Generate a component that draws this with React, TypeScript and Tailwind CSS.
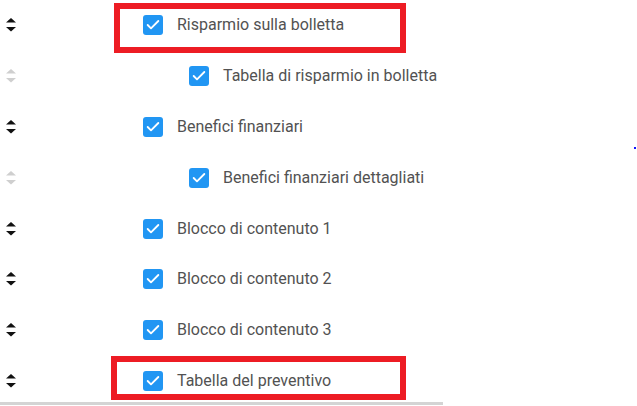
import { Check } from "lucide-react";

interface Row {
  label: string;
  nested?: boolean;
}

const rows: Row[] = [
  { label: "Risparmio sulla bolletta" },
  { label: "Tabella di risparmio in bolletta", nested: true },
  { label: "Benefici finanziari" },
  { label: "Benefici finanziari dettagliati", nested: true },
  { label: "Blocco di contenuto 1" },
  { label: "Blocco di contenuto 2" },
  { label: "Blocco di contenuto 3" },
  { label: "Tabella del preventivo" },
];

function SortHandle({ disabled }: { disabled?: boolean }) {
  const fill = disabled ? "#cfcfcf" : "#111111";
  return (
    <svg width="12" height="16" viewBox="0 0 12 16" className="shrink-0">
      <path d="M1 5.5 L6 1 L11 5.5 Z" fill={fill} />
      <path d="M1 10 L11 10 L6 14.5 Z" fill={fill} />
    </svg>
  );
}

function Checkbox() {
  return (
    <div className="flex h-5 w-5 shrink-0 items-center justify-center rounded-[3px] bg-[#2196f3]">
      <Check className="h-4 w-4 text-white" strokeWidth={2.75} />
    </div>
  );
}

export default function App() {
  return (
    <div className="relative h-[406px] w-[637px] overflow-hidden bg-white font-['Roboto',sans-serif]">
      <div className="flex flex-col">
        {rows.map((row) => (
          <div key={row.label} className="flex h-[50.8px] items-center pl-[5px]">
            <SortHandle disabled={row.nested} />
            <div className={`flex items-center gap-[14px] ${row.nested ? "ml-[172px]" : "ml-[126px]"}`}>
              <Checkbox />
              <span className="text-[16px] text-[#525252]">{row.label}</span>
            </div>
          </div>
        ))}
      </div>
      <div className="-mt-[4.4px] h-[3px] w-[443px] bg-[#d4d4d4]" />

      {/* highlight boxes drawn on top of the screenshot */}
      <div className="absolute left-[114px] top-[3px] h-[50px] w-[292px] border-[6px] border-[#ed1c24]" />
      <div className="absolute left-[111px] top-[356px] h-[44px] w-[295px] border-[6px] border-[#ed1c24]" />
      <div className="absolute left-[634px] top-[147px] h-[2px] w-[2px] bg-[#1010ff]" />
    </div>
  );
}
